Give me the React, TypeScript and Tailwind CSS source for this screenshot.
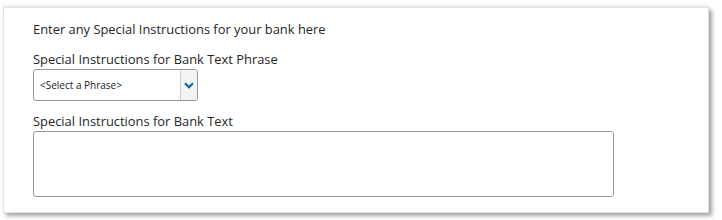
export default function App() {
  return (
    <div className="h-[220px] w-[722px] bg-white pl-[3px] pt-[7px] font-['Open_Sans',sans-serif] text-[#262626]">
      <div className="h-[206px] w-[706px] border border-[#e2e2e2] bg-white pl-[29px] pt-[12px] shadow-[3px_3px_4px_rgba(0,0,0,0.35),0_-2px_4px_rgba(0,0,0,0.08)]">
        <p className="text-[12.9px] leading-[18px]">Enter any Special Instructions for your bank here</p>
        <label className="mt-[12px] block text-[12.9px] leading-[18px]">Special Instructions for Bank Text Phrase</label>
        <div className="mt-[1px] flex h-[32px] w-[165px] overflow-hidden rounded-[3px] border border-[#999] bg-white">
          <div className="flex flex-1 items-center pl-[6px] text-[10px] text-[#222]">&lt;Select a Phrase&gt;</div>
          <div className="flex w-[17px] items-center justify-center border-l border-[#ccc] bg-[#f3f3f3]">
            <svg width="10" height="7" viewBox="0 0 10 7" fill="none">
              <path d="M1 1.2l4 4 4-4" stroke="#0a6aa1" strokeWidth="2.2" />
            </svg>
          </div>
        </div>
        <label className="mt-[11px] block text-[12.9px] leading-[18px]">Special Instructions for Bank Text</label>
        <textarea className="mt-[1px] block h-[66px] w-[581px] resize-none rounded-[3px] border border-[#999] outline-none" />
      </div>
    </div>
  );
}
